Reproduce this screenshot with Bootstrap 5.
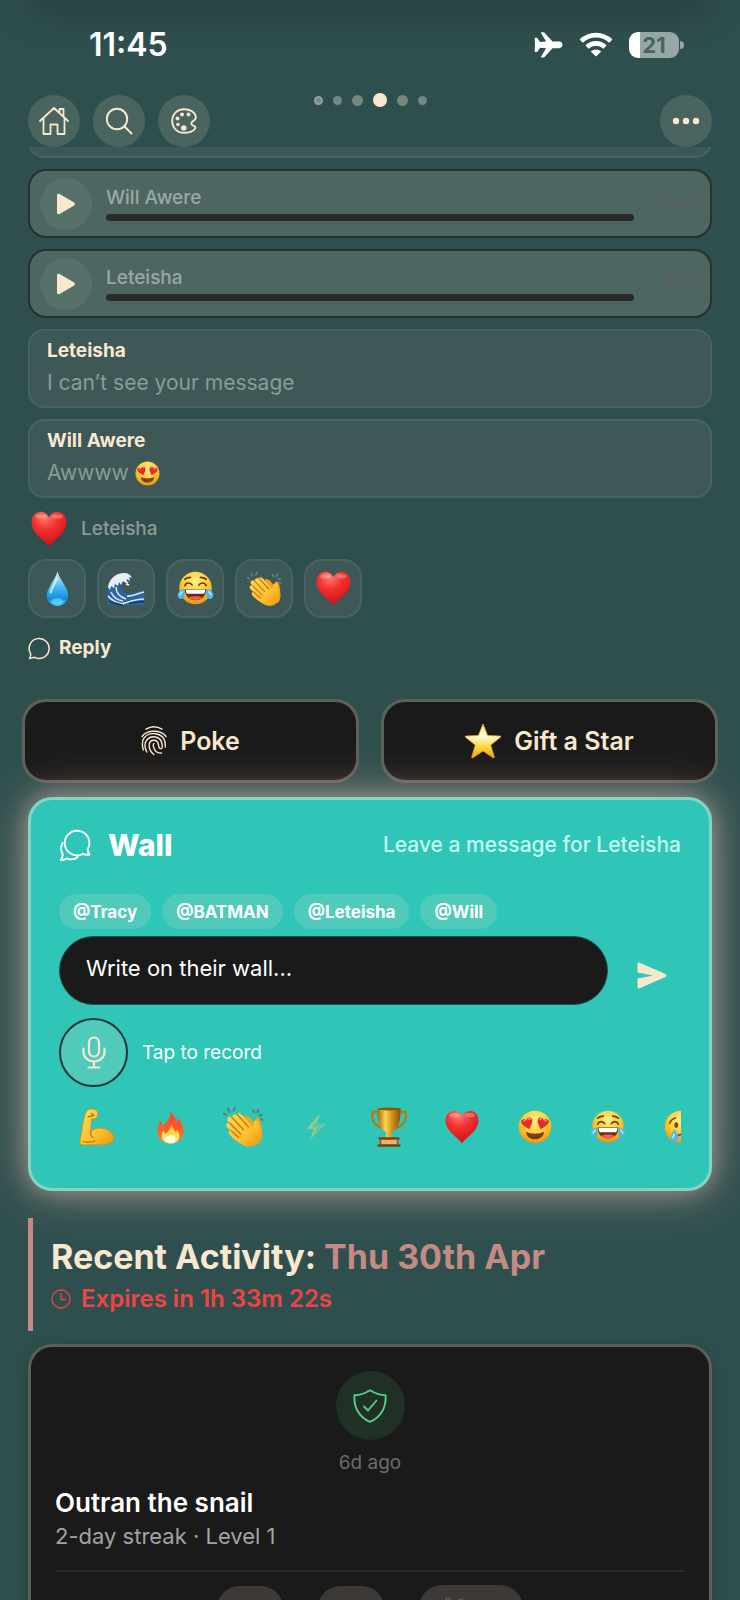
<!DOCTYPE html>
<html lang="en">
<head>
<meta charset="utf-8">
<meta name="viewport" content="width=device-width, initial-scale=1">
<title>Leteisha</title>
<link href="https://cdn.jsdelivr.net/npm/bootstrap@5.3.0/dist/css/bootstrap.min.css" rel="stylesheet">
<style>
:root{--cream:#f9e8d0;--slate:#2f4f4f;--ink:#1a1a1a;--rose:#c48a84;--muted:#8b9c95}
body{background:var(--slate);color:#fff;font-family:Inter,"Liberation Sans",sans-serif;font-size:19px;line-height:24px}
svg{display:block;flex:none}
.phone{height:100vh;overflow:hidden}
.cap-shade{height:0;margin:0 40px;box-shadow:0 0 32px 8px rgba(20,24,24,.5)}
.status{height:93px;padding:0 56px 4px 89px}
.clock{font-size:32px;font-weight:600;line-height:40px}
.battery{font-size:22px;font-weight:700;color:#47625f;width:50px;height:26px;border-radius:9px;background:linear-gradient(90deg,#fff 11px,#97a7a6 11px)}
.battery-tip{width:4px;height:8px;border-radius:0 4px 4px 0;background:#97a7a6;margin-left:1px}
.topbar{display:grid;grid-template-columns:1fr auto 1fr;padding:0 28px}
.tools{gap:13px;padding-top:2px}
.round{width:52px;height:52px;border:0;border-radius:50%;background:#4a6460;color:var(--cream);padding:0;display:flex;align-items:center;justify-content:center}
.pager{height:14px;gap:10px}
.pager i{width:9px;height:9px;border-radius:50%;background:#728a80}
.pager .mid{width:11px;height:11px;background:#75877f}
.pager .on{width:14px;height:14px;background:var(--cream)}
.pager .ring{border:2px solid #8fa199}
.feed{padding:0 28px}
.peek{height:11px;overflow:hidden}
.bubble{background:#3e5757;border:2px solid #486461;border-radius:16px;min-height:79px;padding:8px 17px}
.bubble h2{font-size:19px;font-weight:700;line-height:24px;color:var(--cream);margin:0 0 5px}
.bubble p{font-size:21px;line-height:30px;color:var(--muted);margin:0;gap:6px}
.voice{background:#4e6661;border:2px solid #2a2f2f;border-radius:18px;height:69px;padding:0 10px;gap:14px;color:#9aa8a5;font-weight:500}
.voice .round{background:#58706a}
.track{height:7px;border-radius:4px;background:#2a2a2a;margin-top:4px}
.len{width:52px;color:#5c5f5d}
.stack{gap:11px}
.liked{color:var(--muted);font-weight:500;height:36px;margin-top:13px;padding-left:3px;gap:14px}
.react{width:58px;height:59px;background:#3e5757;border:2px solid #486461;border-radius:18px;padding:0}
.reply{border:0;background:none;color:var(--cream);font-weight:700;padding:0;margin-top:18px;gap:8px}
.actions{padding:0 22px;margin-top:39px;gap:22px}
.cta{height:84px;background:var(--ink);border:3px solid #5e605a;border-radius:24px;color:var(--cream);font-size:25px;font-weight:600;gap:13px}
.wall{position:relative;margin:14px 28px 0;padding:27px 28px 39px;background:#2fc6b8;border:3px solid #85d4c2;border-radius:24px;box-shadow:0 0 24px rgba(245,220,205,.4),0 0 52px rgba(225,180,165,.48)}
.wall h1{font-size:30px;font-weight:800;line-height:36px}
.hint{font-size:21px;font-weight:500;color:#c3fbf3}
.tags{gap:11px;margin-top:31px}
.tag{height:35px;border:0;border-radius:18px;padding:0 14px;background:#50cabb;color:#fff;font-size:17px;font-weight:700;line-height:24px}
.compose{gap:14px;margin-top:7px}
.write{height:69px;border-radius:35px;border:1px solid #22504d;background:var(--ink);color:#fff;font-size:22px;padding:0 26px 6px}
.write:focus{background:var(--ink);color:#fff}
.write::placeholder{color:#fff;opacity:1}
.send{width:59px;height:59px;border:0;background:none;padding:0;color:var(--cream)}
.record{gap:14px;margin-top:13px}
.mic{width:69px;height:69px;border:2px solid #20383a;border-radius:50%;background:#50cabb;color:var(--cream);padding:0}
.strip{height:44px;margin-top:18px;padding-left:9px;gap:15px;overflow:hidden}
.strip button{width:58px;flex:none;border:0;background:none;padding:0}
.recent{margin:27px 28px 0;padding:17px 0 17px 18px;border-left:5px solid var(--rose)}
.recent h1{font-size:34px;font-weight:700;line-height:44px;color:var(--cream);margin:0 0 5px}
.recent h1 span{color:var(--rose)}
.expires{font-size:24px;font-weight:600;line-height:30px;color:#ef4444;gap:10px}
.event{margin:13px 28px 0;padding:24px;background:var(--ink);border:3px solid #5c5e57;border-radius:24px;box-shadow:0 4px 14px rgba(0,0,0,.2)}
.shield{width:69px;height:69px;border-radius:50%;background:#203024;color:#4fd08a}
.ago{color:#6c6c6c;margin-top:11px}
.event h2{font-size:26px;font-weight:600;line-height:32px;margin:12px 0 3px}
.event p{font-size:22px;line-height:28px;color:#a3a3a3;margin:0}
.foot{border-top:2px solid #2a2a2a;margin-top:20px;padding-top:13px;gap:35px}
.pill{width:66px;height:44px;border:0;border-radius:22px;background:#3c3936;padding:0}
.pill.wide{width:104px;height:46px;border-radius:23px}
</style>
</head>
<body>
<svg width="0" height="0" class="position-absolute" aria-hidden="true">
<defs>
<radialGradient id="gFace" cx=".5" cy=".3" r=".75"><stop offset="0" stop-color="#fff08a"/><stop offset=".5" stop-color="#fdd035"/><stop offset="1" stop-color="#e88a10"/></radialGradient>
<radialGradient id="gHeart" cx=".4" cy=".15" r=".9"><stop offset="0" stop-color="#ff7d70"/><stop offset=".4" stop-color="#f5312f"/><stop offset="1" stop-color="#c90d16"/></radialGradient>
<linearGradient id="gDrop" x1="0" y1="0" x2="0" y2="1"><stop offset="0" stop-color="#d8f5ff"/><stop offset=".45" stop-color="#46b9f2"/><stop offset=".8" stop-color="#0d8fe0"/><stop offset="1" stop-color="#4fd0fb"/></linearGradient>
<linearGradient id="gSkin" x1="0" y1="0" x2="1" y2="1"><stop offset="0" stop-color="#ffda55"/><stop offset=".6" stop-color="#fdc02f"/><stop offset="1" stop-color="#e8950f"/></linearGradient>
<linearGradient id="gStar" x1="0" y1="0" x2="0" y2="1"><stop offset="0" stop-color="#ffe98a"/><stop offset=".35" stop-color="#fffbe0"/><stop offset=".65" stop-color="#fddb4a"/><stop offset="1" stop-color="#f0a012"/></linearGradient>
<linearGradient id="gFire" x1="0" y1="0" x2="0" y2="1"><stop offset="0" stop-color="#f2472b"/><stop offset=".6" stop-color="#f9622a"/><stop offset="1" stop-color="#f98f26"/></linearGradient>
<linearGradient id="gFlame" x1="0" y1="0" x2="0" y2="1"><stop offset="0" stop-color="#ffae2e"/><stop offset=".6" stop-color="#ffdf5a"/><stop offset="1" stop-color="#fff6b8"/></linearGradient>
<linearGradient id="gGold" x1="0" y1="0" x2="1" y2="0"><stop offset="0" stop-color="#a8650c"/><stop offset=".35" stop-color="#fbd54e"/><stop offset=".6" stop-color="#d8981e"/><stop offset="1" stop-color="#8a5208"/></linearGradient>
<symbol id="heart" viewBox="0 0 36 36"><path fill="url(#gHeart)" d="M18 35.500C14 29 1 23.500 .6 11.500 .3 4.500 5 .8 9.500.8 13.500.8 16.600 3.200 18 6.500 19.400 3.200 22.500.8 26.500.8 31 .8 35.700 4.500 35.400 11.500 35 23.500 22 29 18 35.500z"/><ellipse cx="9.500" cy="5.500" rx="5" ry="2.200" fill="#fff" opacity=".28"/><ellipse cx="26.500" cy="5.500" rx="5" ry="2.200" fill="#fff" opacity=".28"/></symbol>
<symbol id="drop" viewBox="0 0 36 36"><path fill="url(#gDrop)" d="M18 .5C20 9 29 17 29 25a11 11 0 0 1-22 0C7 17 16 9 18 .5z"/><path d="M17 8c-2 6-5 9-6 14" stroke="#fff" stroke-width="2.500" fill="none" opacity=".6" stroke-linecap="round"/><ellipse cx="18" cy="31" rx="6" ry="3" fill="#8ce9ff" opacity=".5"/></symbol>
<symbol id="wave" viewBox="0 0 38 34"><path fill="#2b64a0" d="M.5 33V17C1 8 9 1.500 17 1.500c4 0 6 2 7.500 4.500l-3 1 1 3-4-2-3 3c-3 3-2 7 1 9 7 4 13-1 21-2v15z"/><path fill="#e6eef0" d="M1 15C2 7 9 1 17 1c4 0 7 2 8 5l-3-1 1 4-3-2-1 4-3-2-2 4-2-3-1 4-3-2-1 4-3-2-1 4z"/><path d="M4 20c2 5 6 8 12 9M9 15c0 6 4 10 10 12M1 24c4 5 9 7 16 8M20 24c6 1 11-3 17-4M14 32c8-2 15-5 23-5" stroke="#dbe7ea" stroke-width="1.600" fill="none"/><path d="M2 29c5 3 10 3 14 4M22 31c6 0 10-2 15-1" stroke="#123c6e" stroke-width="1.500" fill="none"/><path d="M19 12l3 1M17 8l4 3" stroke="#fff" stroke-width="1.500"/></symbol>
<symbol id="joy" viewBox="0 0 38 36"><circle cx="19" cy="17.500" r="16.700" fill="url(#gFace)"/><path d="M8 15c1.500-3.500 6-3.500 7.500-.5M22.500 14.500c1.500-3 6-3 7.500.5M8 8.500c2-1.500 4-2 6-2M24 6.500c2 0 4 .5 6 2" stroke="#6b3d0a" stroke-width="1.700" fill="none" stroke-linecap="round"/><path d="M8 18.500h22c0 7-4.500 11.500-11 11.500S8 25.500 8 18.500z" fill="#6b2c12"/><path d="M9 19h20c0 2.500-.8 4-1.500 4.500h-17C9.800 23 9 21.500 9 19z" fill="#fff"/><path d="M12 27.500c4-2 10-2 14 0-4 3-10 3-14 0z" fill="#f0604f"/><path d="M8 18.500C3 19 .4 22 .6 25.500c.2 4 6 4.500 7 .5.500-2 .4-5 .4-7.500zM30 18.500c5 .5 7.600 3.500 7.400 7-.2 4-6 4.500-7 .5-.5-2-.4-5-.4-7.500z" fill="#4db7f2"/><path d="M3 25c.5-2 1.500-3 3-4M35 25c-.5-2-1.500-3-3-4" stroke="#c8eeff" stroke-width="1.500" fill="none"/></symbol>
<symbol id="eyes" viewBox="0 0 36 36"><circle cx="18" cy="18" r="17.300" fill="url(#gFace)"/><path fill="#e52b2d" d="M12 20.500C9 18.500 3.500 16 3.300 12.500 3.200 10 6.500 8.500 8.800 11.200 9.500 7.500 14 7 15 10c1 3-1.500 7-3 10.500zM24 20.500c3-2 8.500-4.500 8.700-8 .1-2.500-3.200-4-5.500-1.300-.7-3.700-5.200-4.200-6.200-1.200-1 3 1.500 7 3 10.500z"/><path d="M6 11.500h1.500M11.500 9.500h1.800M23 9.500h1.600M28.500 11.500h1.600" stroke="#ff9d94" stroke-width="1.500" stroke-linecap="round"/><path d="M8.500 23c4 2.800 15 2.800 19 0 0 4.500-3.800 8-9.500 8s-9.500-3.500-9.500-8z" fill="#7a3c10"/></symbol>
<symbol id="cry" viewBox="0 0 36 36"><circle cx="18" cy="18" r="17.300" fill="url(#gFace)"/><ellipse cx="13" cy="16" rx="2" ry="3" fill="#7a4510"/><ellipse cx="25" cy="16" rx="2" ry="3" fill="#7a4510"/><path d="M6 14c1-3 3-4.500 6-5.500M24 8.500c3 1 5 2.500 6 5.500M14 28c2-3 8-3 10 0" stroke="#7a4510" stroke-width="1.700" fill="none" stroke-linecap="round"/><path d="M11 20c2 4 4.500 6 4.500 9.500 0 5-8.500 5-8.500 0C7 26 9.500 24 11 20z" fill="#4db7f2"/><path d="M9.500 30c0-2 1-3 1.500-5" stroke="#d5f2ff" stroke-width="1.600" fill="none"/></symbol>
<symbol id="clap" viewBox="0 0 38 38"><g fill="none" stroke="#5f7c80" stroke-width="2" stroke-linecap="round"><path d="M1.500 7l2 1M5.500 2.500l1 2.500M11.500 1.500l-1 2.500M28 4l1 1.500M33 3.500l-1 2M36 8l-2 .5M35 12l1.500.5"/></g><path fill="#eda31c" d="M20 9c4-1 6 2 10 7l.5-4c.5-2 4-1 4.500 2 1 7 3 13-.5 19l-8 3z"/><path fill="url(#gSkin)" d="M13.500 7.500c1.500-1.500 3-1 4.500.5l10 11 1-4.500c1-2.500 4-1.500 4.500 1 1 6 3 10 1.500 14.500-1.500 5-9 8.500-14.500 6C15 33.500 9 28.500 6.500 25.500c-1.500-2 .3-4 2-3C6 20.500 4.500 19.500 4 18c-1-2 1.500-3.800 3-2.500-2-2-3-3.500-1.500-5 1-1.200 2.500-.8 3.500.2 0-2.500 2.500-3.700 4.500-3.200z"/><path d="M9 10.500l10.500 11M7 15.500L17 25.500M8.500 22.500l6.500 6M13.500 7.500L24 19" stroke="#c97b0c" stroke-width="1.300" fill="none" stroke-linecap="round"/></symbol>
<symbol id="arm" viewBox="0 0 36 38"><path fill="url(#gSkin)" stroke="#d98a10" stroke-width=".8" d="M7.500 3.500C9 1 12 .6 14.500 1.200c4 .6 5 3.800 4 6.800-.8 2.600-3.500 3.500-6 2.800-.5 5-1 8.500-.5 12.200 5-4 12-3.500 17-1 4 2 7 6 5.800 9.800C33 37 22 37 14 36.800 8.500 36.600 3 38 1.200 35.500c-1-1.500.6-6 1.600-12C4 16 5 8 7.500 3.500z"/><path d="M9 9c2-.8 4-.5 5.500-2M12.500 5.500l2.500 2M12 23c-1 3 0 5 2 6.500M4 33.500c5 1.500 9 .5 12-.5" stroke="#b96f0a" stroke-width="1.200" fill="none" stroke-linecap="round"/></symbol>
<symbol id="fire" viewBox="0 0 28 34"><path fill="url(#gFire)" d="M14 .5c2 3 6 6 6.500 11 1-1.500 1.200-3 .8-4.800C24.500 10 27.500 15 27.500 21c0 8-6 12.500-13.500 12.500S.5 29 .5 21.500c0-5 2-7.500 2-12 2 1.500 3 3.500 3 6C9 12 14.500 8 14 .5z"/><path fill="url(#gFlame)" d="M15 13c0 4 3.500 6 4.500 9 .8-.8 1-1.800 1-3 2.500 3 3 6 2.500 8.500-1 4-5 6-9 6s-8.500-2.500-9-7c-.3-3 .5-5 1.500-6.500.8 1.200 1.500 2 2 3.500 3-2 6-5.500 6.500-10.500z"/><ellipse cx="14" cy="29" rx="5" ry="4" fill="#fffbdc"/></symbol>
<symbol id="bolt" viewBox="0 0 24 32"><path fill="#66c79c" d="M16.500 1L1 18.500h8.500L4 31.500 23 12.500h-9.500z"/><path d="M15 5L5 17h7l-4 9" stroke="#a3d68a" stroke-width="1.200" fill="none"/></symbol>
<symbol id="cup" viewBox="0 0 38 40"><path d="M9 5H2.500C1 13 5 19 13 21M29 5h6.500C37 13 33 19 25 21" fill="none" stroke="#b67a14" stroke-width="2.400"/><path fill="url(#gGold)" d="M7.500 1h23c.5 12-2 21-8 23.500-1 1.500-1 5 .5 6.500h-8c1.500-1.500 1.500-5 .5-6.500C9.500 22 7 13 7.500 1z"/><ellipse cx="19" cy="2" rx="11.500" ry="1.500" fill="#8a5609"/><path fill="#eeb36a" d="M10 31h18v6H10z"/><path d="M8.500 31.500h21M7.500 38.500h23" stroke="#7b3f12" stroke-width="2.400"/><path d="M10.500 31v7M27.500 31v7" stroke="#9a5420" stroke-width="1.500"/></symbol>
<symbol id="star" viewBox="0 0 36 36"><path fill="url(#gStar)" stroke="#e9a51d" stroke-width=".8" stroke-linejoin="round" d="M18 1l4.600 11.500 12.800.6c.6.100.7.600.3 1l-10 8 3.600 12c.1.700-.5 1-1 .7L18 28l-10.300 6.800c-.5.300-1.100 0-1-.7l3.600-12-10-8c-.4-.4-.3-.9.300-1l12.800-.6z"/></symbol>
</defs>
</svg>

<div class="phone">
<div class="cap-shade"></div>
<div class="status d-flex align-items-center justify-content-between">
  <div class="clock">11:45</div>
  <div class="d-flex align-items-center">
    <svg width="29" height="26" viewBox="0 0 29 26" fill="#fff"><path d="M1.500 5.800h1.600l3 4.200 6-.4L7 1C6.800.4 7 .2 7.500.2h2c.4 0 .7.200 1 .5l8 8.900h6.800c2 .1 3.200 1.400 3.200 3.200s-1.200 3.300-3.200 3.400h-6.800l-8 8.900c-.3.300-.6.500-1 .5h-2c-.5 0-.7-.2-.5-.8l5.100-8.600-6-.4-3 4.200H1.500c-.6 0-.9-.2-.8-.8L1 13 .7 6.600c-.1-.6.200-.8.800-.8z"/></svg>
    <svg class="ms-3" width="34" height="26" viewBox="0 0 34 26" fill="none" stroke="#fff" stroke-width="4.600"><path d="M2.200 9.200a21 21 0 0 1 29.600 0M8 15a13 13 0 0 1 18 0"/><path d="M17 24.500l-5.200-5a7.600 7.600 0 0 1 10.400 0z" fill="#fff" stroke="none"/></svg>
    <div class="battery ms-3 d-flex align-items-center justify-content-center">21</div><div class="battery-tip"></div>
  </div>
</div>

<header class="topbar">
  <nav class="tools d-flex">
    <button class="round" aria-label="Home"><svg width="30" height="30" viewBox="0 0 30 30" fill="none" stroke="currentColor" stroke-width="1.800" stroke-linejoin="round" stroke-linecap="round"><path d="M1 15L15 2l14 13M4.500 12v16h7V18.500h7V28h7V12M20.500 6.500V3h4v7.500"/></svg></button>
    <button class="round" aria-label="Search"><svg width="28" height="28" viewBox="0 0 28 28" fill="none" stroke="currentColor" stroke-width="1.900" stroke-linecap="round"><circle cx="12" cy="12" r="10.200"/><path d="M19.500 19.500l7 7"/></svg></button>
    <button class="round" aria-label="Theme"><svg width="26" height="26" viewBox="0 0 26 26"><path d="M13 1.200C6 1.200 1.200 6.500 1.200 13S6 24.800 13 24.800c4.500 0 9-1.500 10.800-3.800 1.500-2-.3-3-2-3.600-1.500-.6-2-2.400-.6-3.600 1-.9 3.600-1.800 3.600-4.300C24.800 4.500 19.500 1.200 13 1.200z" fill="none" stroke="currentColor" stroke-width="1.900"/><g fill="currentColor"><circle cx="6.500" cy="10.500" r="2"/><circle cx="11" cy="6.500" r="2"/><circle cx="17.500" cy="6.500" r="2"/><circle cx="7" cy="16.500" r="1.800"/><circle cx="12.800" cy="20" r="2.800"/></g></svg></button>
  </nav>
  <div class="pager d-flex align-items-center"><i class="ring"></i><i></i><i class="mid"></i><i class="on"></i><i class="mid"></i><i></i></div>
  <div class="tools d-flex justify-content-end"><button class="round" aria-label="More"><svg width="28" height="8" viewBox="0 0 28 8" fill="currentColor"><circle cx="4" cy="4" r="3.200"/><circle cx="14" cy="4" r="3.200"/><circle cx="24" cy="4" r="3.200"/></svg></button></div>
</header>

<main>
<section class="feed">
  <div class="d-flex flex-column stack">
    <div class="peek d-flex align-items-end"><div class="bubble w-100"></div></div>
    <article class="voice d-flex align-items-center">
      <button class="round" aria-label="Play"><svg width="20" height="22" viewBox="0 0 20 22" fill="currentColor"><path d="M1 2.500C1 1 2.200.4 3.500 1.100l14.300 8.200c1.400.9 1.400 2.500 0 3.400L3.500 20.900C2.200 21.600 1 21 1 19.500z"/></svg></button>
      <div class="flex-grow-1"><div>Will Awere</div><div class="track"></div></div>
      <div class="len text-end">0:08</div>
    </article>
    <article class="voice d-flex align-items-center">
      <button class="round" aria-label="Play"><svg width="20" height="22" viewBox="0 0 20 22" fill="currentColor"><path d="M1 2.500C1 1 2.200.4 3.500 1.100l14.300 8.200c1.400.9 1.400 2.500 0 3.400L3.500 20.900C2.200 21.600 1 21 1 19.500z"/></svg></button>
      <div class="flex-grow-1"><div>Leteisha</div><div class="track"></div></div>
      <div class="len text-end">0:12</div>
    </article>
    <article class="bubble"><h2>Leteisha</h2><p>I can’t see your message</p></article>
    <article class="bubble"><h2>Will Awere</h2><p class="d-flex align-items-center">Awwww <svg width="25" height="25" role="img" aria-label="heart eyes"><use href="#eyes"/></svg></p></article>
  </div>
  <div class="liked d-flex align-items-center"><svg width="36" height="36"><use href="#heart"/></svg><span>Leteisha</span></div>
  <div class="d-flex stack mt-2 pt-1">
    <button class="react d-flex align-items-center justify-content-center" aria-label="Drop"><svg width="35" height="35"><use href="#drop"/></svg></button>
    <button class="react d-flex align-items-center justify-content-center" aria-label="Wave"><svg width="38" height="34"><use href="#wave"/></svg></button>
    <button class="react d-flex align-items-center justify-content-center" aria-label="Joy"><svg width="37" height="35"><use href="#joy"/></svg></button>
    <button class="react d-flex align-items-center justify-content-center" aria-label="Clap"><svg width="36" height="36"><use href="#clap"/></svg></button>
    <button class="react d-flex align-items-center justify-content-center" aria-label="Love"><svg width="35" height="35"><use href="#heart"/></svg></button>
  </div>
  <button class="reply d-flex align-items-center"><svg width="23" height="23" viewBox="0 0 23 23" fill="none" stroke="currentColor" stroke-width="1.500" stroke-linejoin="round"><path d="M2.500 16.500A10 10 0 1 1 6.500 20.300L1.500 21.500C2.500 20 3 18.500 2.500 16.500z"/></svg>Reply</button>
</section>

<div class="actions d-flex">
  <button class="cta flex-fill w-50 d-flex align-items-center justify-content-center"><svg width="26" height="30" viewBox="0 0 26 30" fill="none" stroke="currentColor" stroke-width="1.400" stroke-linecap="round"><path d="M5 3.200c5-3 11-3 16 0M1 10.500C5.500 3.500 20.500 3.500 25 10.500M2.500 24c-1.500-3-1.700-9 .5-12 5-7 19-5.500 21 4 .3 1.500.3 3 .2 5M5.800 26c-2-4-2.500-9 0-12 4.500-5.500 13.500-3.500 15 3 .5 2.500 1.200 5-.5 5.500-2.600.7-2.500-2-3-4.500-1-5-8-5-9 0-.6 4 1.500 8 4.500 10.500M13 17.500c-1.500 1-.5 5.500 2 8 1.500 1.300 3 2 5.500 1.500"/></svg>Poke</button>
  <button class="cta flex-fill w-50 d-flex align-items-center justify-content-center"><svg width="36" height="36"><use href="#star"/></svg>Gift a Star</button>
</div>

<section class="wall">
  <div class="d-flex align-items-center justify-content-between">
    <div class="d-flex align-items-center gap-3"><svg width="33" height="33" viewBox="0 0 33 33" fill="none" stroke="#fff" stroke-width="1.900" stroke-linejoin="round" stroke-linecap="round"><path d="M28.800 20A12.300 12.300 0 1 0 24 24.800c1.800 1 3.800 1.200 6.500.8-1.300-1.300-1.900-3-1.700-5.600z"/><path d="M3.500 14c-2 4-1.800 8 .3 11.500-.2 2.500-.8 4-2 5.500 2 .2 4-.3 6-1.500 4 1.500 8 1 11-1.500"/></svg><h1 class="m-0">Wall</h1></div>
    <span class="hint">Leave a message for Leteisha</span>
  </div>
  <div class="tags d-flex">
    <button class="tag">@Tracy</button><button class="tag">@BATMAN</button><button class="tag">@Leteisha</button><button class="tag">@Will</button>
  </div>
  <div class="compose d-flex align-items-end">
    <input type="text" class="write form-control" placeholder="Write on their wall..." aria-label="Write on their wall">
    <button class="send d-flex align-items-center justify-content-center flex-shrink-0" aria-label="Send"><svg width="30" height="27" viewBox="0 0 30 27" fill="currentColor"><path d="M.5 1.500C.5.500 1.200.2 2 .6l26.500 11.500c1.200.6 1.200 2.200 0 2.800L2 26.400c-.8.4-1.500.1-1.500-.9V16.500L16 13.500.5 10.500z"/></svg></button>
  </div>
  <div class="record d-flex align-items-center">
    <button class="mic d-flex align-items-center justify-content-center" id="mic" aria-label="Record"><svg width="24" height="33" viewBox="0 0 24 33" fill="none" stroke="currentColor" stroke-width="2.200" stroke-linecap="round"><rect x="7" y="1.500" width="10" height="19" rx="5"/><path d="M1.500 12.500v3.500a10.500 9.500 0 0 0 21 0v-3.500M12 26v5.500M6.500 31.500h11"/></svg></button>
    <label for="mic">Tap to record</label>
  </div>
  <div class="strip d-flex">
    <button class="d-flex align-items-center justify-content-center" aria-label="Strong"><svg width="36" height="38"><use href="#arm"/></svg></button>
    <button class="d-flex align-items-center justify-content-center" aria-label="Fire"><svg width="27" height="33"><use href="#fire"/></svg></button>
    <button class="d-flex align-items-center justify-content-center" aria-label="Clap"><svg width="42" height="42"><use href="#clap"/></svg></button>
    <button class="d-flex align-items-center justify-content-center" aria-label="Bolt"><svg width="24" height="30"><use href="#bolt"/></svg></button>
    <button class="d-flex align-items-center justify-content-center" aria-label="Trophy"><svg width="38" height="40"><use href="#cup"/></svg></button>
    <button class="d-flex align-items-center justify-content-center" aria-label="Love"><svg width="34" height="34"><use href="#heart"/></svg></button>
    <button class="d-flex align-items-center justify-content-center" aria-label="Heart eyes"><svg width="34" height="34"><use href="#eyes"/></svg></button>
    <button class="d-flex align-items-center justify-content-center" aria-label="Joy"><svg width="36" height="34"><use href="#joy"/></svg></button>
    <button class="d-flex align-items-center justify-content-center" aria-label="Crying"><svg width="34" height="34"><use href="#cry"/></svg></button>
  </div>
</section>

<section class="recent">
  <h1>Recent Activity: <span>Thu 30th Apr</span></h1>
  <div class="expires d-flex align-items-center"><svg width="20" height="20" viewBox="0 0 20 20" fill="none" stroke="currentColor" stroke-width="1.300"><circle cx="10" cy="10" r="9"/><path d="M10 4v6.500h5"/></svg>Expires in 1h 33m 22s</div>
</section>

<article class="event">
  <div class="d-flex flex-column align-items-center">
    <div class="shield d-flex align-items-center justify-content-center"><svg width="34" height="34" viewBox="0 0 34 34" fill="none" stroke="currentColor" stroke-width="1.900" stroke-linejoin="round" stroke-linecap="round"><path d="M17 1.200c5 3.200 9.500 4.800 15.500 5C33.500 18 28 28.500 17 32.800 6 28.500.5 18 1.500 6.200c6-.2 10.500-1.800 15.500-5z"/><path d="M11 17.500l4 4 8.500-10"/></svg></div>
    <div class="ago">6d ago</div>
  </div>
  <h2>Outran the snail</h2>
  <p>2-day streak · Level 1</p>
  <div class="foot d-flex justify-content-center align-items-center">
    <button class="pill" aria-label="Like"></button>
    <button class="pill" aria-label="Comment"></button>
    <button class="pill wide d-flex align-items-center ps-4" aria-label="Clap"><svg width="22" height="22"><use href="#clap"/></svg></button>
  </div>
</article>
</main>
</div>
<script src="https://cdn.jsdelivr.net/npm/bootstrap@5.3.0/dist/js/bootstrap.bundle.min.js"></script>
</body>
</html>
